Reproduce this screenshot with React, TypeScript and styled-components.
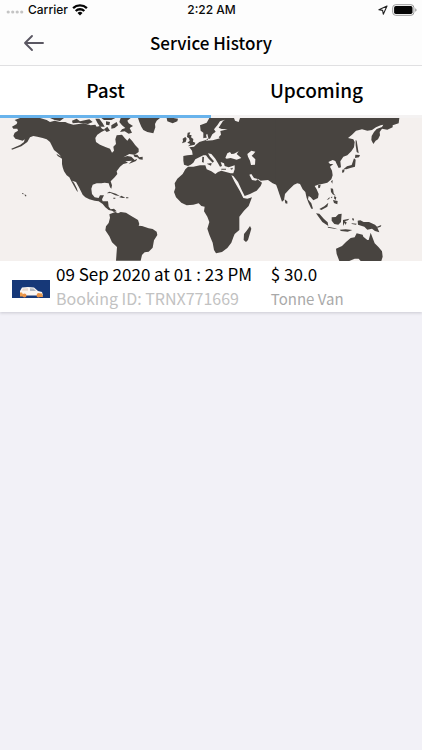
import React, { useState } from "react";
import styled, { createGlobalStyle } from "styled-components";

const GlobalStyle = createGlobalStyle`
  * { box-sizing: border-box; }
  body { margin: 0; background: #f2f1f7; color: #0b0b0b; font-family: "Noto Sans CJK SC", "Noto Sans", sans-serif; }
`;

const Page = styled.div`
  min-height: 100vh;
  background: #f2f1f7;
`;

const StatusBar = styled.div`
  display: grid;
  grid-template-columns: 1fr auto 1fr;
  align-items: center;
  height: 20px;
  padding: 0 5px 0 6px;
  background: #fdfdfd;
  font: 500 12px/20px Inter, sans-serif;
`;

const StatusGroup = styled.div<{ $end?: boolean }>`
  display: flex;
  align-items: center;
  justify-content: ${(p) => (p.$end ? "flex-end" : "flex-start")};
  gap: 4px;
`;

const Header = styled.header`
  display: grid;
  grid-template-columns: 44px 1fr 44px;
  align-items: center;
  height: 46px;
  padding: 0 12px;
  background: #fdfdfd;
  border-bottom: 1px solid #e0e0e2;
`;

const BackButton = styled.button`
  display: flex;
  align-items: center;
  justify-content: center;
  height: 44px;
  padding: 0;
  border: 0;
  background: none;
  cursor: pointer;
`;

const Title = styled.h1`
  margin: 0;
  text-align: center;
  color: #000;
  font-size: 17px;
  font-weight: 500;
  line-height: 24px;
`;

const Tabs = styled.div`
  display: flex;
  height: 52px;
  background: #fff;
`;

const Tab = styled.button<{ $active: boolean }>`
  flex: 1;
  padding: 0 0 2px;
  border: 0;
  border-bottom: 3px solid ${(p) => (p.$active ? "#68b3ec" : "#f4f2f2")};
  background: none;
  color: #000;
  font-family: inherit;
  font-size: 19px;
  font-weight: 500;
  line-height: 28px;
  cursor: pointer;
`;

const Card = styled.article`
  background: #fff;
  box-shadow: 0 1px 3px rgba(40, 40, 60, 0.2);
`;

const MapPicture = styled.svg`
  display: block;
  width: 100%;
  height: auto;
  background: #f4f0ee;
`;

const Details = styled.div`
  display: grid;
  grid-template-columns: 38px 3fr 2fr;
  column-gap: 6px;
  align-items: center;
  padding: 0 12px 1px;
`;

const VanPicture = styled.svg`
  display: block;
  width: 38px;
  height: 18px;
  margin-top: 5px;
`;

const Column = styled.div`
  white-space: nowrap;
`;

const Primary = styled.div`
  color: #000;
  font-size: 17px;
  line-height: 25px;
`;

const Secondary = styled.div<{ $service?: boolean }>`
  font-size: ${(p) => (p.$service ? "15px" : "16px")};
  line-height: 25px;
  color: ${(p) => (p.$service ? "#a9a9a9" : "#c2c2c2")};
`;

function SignalDots() {
  return (
    <svg width="18" height="12" viewBox="0 0 18 12" fill="#c4c4c4" aria-hidden="true">
      <circle cx="2.2" cy="8" r="1.6" />
      <circle cx="6.7" cy="8" r="1.6" />
      <circle cx="11.2" cy="8" r="1.6" />
      <circle cx="15.7" cy="8" r="1.6" />
    </svg>
  );
}

function Wifi() {
  return (
    <svg width="16" height="12" viewBox="0 0 16 12" fill="none" stroke="#050505" strokeWidth="2.3" aria-hidden="true">
      <path d="M1.1 4.2a10 10 0 0 1 13.8 0M3.7 7a6.2 6.2 0 0 1 8.6 0" />
      <path d="M8 11.6 5.5 9a3.6 3.6 0 0 1 5 0Z" fill="#050505" stroke="none" />
    </svg>
  );
}

function LocationArrow() {
  return (
    <svg width="10" height="10" viewBox="0 0 10 10" fill="none" stroke="#222" strokeWidth="1.1" strokeLinejoin="round" aria-hidden="true">
      <path d="M9 1 .9 4.7l3.7.7.7 3.8Z" />
    </svg>
  );
}

function Battery() {
  return (
    <svg width="25" height="12" viewBox="0 0 25 12" aria-hidden="true">
      <rect x=".7" y=".7" width="21.2" height="10.6" rx="3" fill="#fff" stroke="#999" />
      <rect x="2.1" y="2.1" width="18.4" height="7.8" rx="1.7" fill="#050505" />
      <path d="M23.2 4.2q1.4.6 1.4 1.8t-1.4 1.8Z" fill="#999" />
    </svg>
  );
}

function BackArrow() {
  return (
    <svg width="22" height="18" viewBox="0 0 22 18" fill="none" stroke="#5a5762" strokeWidth="1.9" strokeLinecap="round" strokeLinejoin="round" aria-hidden="true">
      <path d="M20 9H2M9 2 2 9l7 7" />
    </svg>
  );
}

function WorldMap() {
  const land = "#484440";
  const sea = "#f4f0ee";
  return (
    <MapPicture viewBox="0 12 1266 429" role="img" aria-label="World map">
      <g fill={land}>
        <path d="M60 12 44 18 52 24 50 30 36 38 40 44 52 44 54 50 44 56 40 66 46 74 60 78 68 80 74 76 72 84 60 93 34 104 36 107 64 97 82 84 90 70 100 66 112 68 128 72 140 76 150 84 156 96 162 108 172 116 180 124 186 134 186 150 188 160 192 172 200 184 208 190 214 202 222 216 230 230 234 234 230 222 222 206 216 200 228 204 236 218 244 234 248 242 256 250 268 256 284 260 296 262 308 270 316 280 326 288 336 290 342 294 350 292 342 284 332 286 326 278 324 262 308 262 306 256 312 244 300 244 296 252 284 250 276 240 274 224 278 212 290 208 304 208 314 206 326 208 330 220 334 224 336 214 332 202 344 190 352 180 350 172 360 158 370 150 384 146 376 142 396 140 386 150 408 141 412 134 404 138 394 128 382 126 370 130 388 120 404 122 416 114 416 104 406 94 396 80 388 72 382 80 374 72 366 62 350 64 346 76 348 90 340 98 342 110 336 116 330 104 318 100 300 92 288 84 286 72 292 62 304 54 316 48 306 44 300 36 290 38 286 32 272 34 250 28 236 30 220 32 204 28 196 24 180 24 164 20 150 24 140 18 120 12Z" />
        <path d="M362 12 392 12 382 20 386 28 399 36 389 42 396 56 386 59 374 52 360 54 366 46 376 42 366 34 358 24ZM312 46 322 38 330 50 320 54ZM150 12 192 12 180 21 164 18ZM216 20 230 14 240 22 268 16 278 24 264 30 236 26 218 28ZM286 14 298 14 308 28 314 38 300 38 292 26ZM304 12 346 12 334 18 312 18ZM318 22 330 24 328 34 318 32ZM334 34 350 24 354 34 344 42 334 44ZM400 122 412 122 418 130 428 128 428 137 418 136 412 130 404 129ZM414 12 418 24 424 38 430 48 442 54 460 58 466 40 465 30 470 20 480 12ZM500 12 502 22 518 28 532 22 534 14 520 12Z" />
        <path d="m320 238 8-5 20 6 12 8-14-3-14-7Zm38 12 6-5 12 6-8 1Zm20 0h7v3h-7Zm-38 1h6v3h-6ZM66 237l4 1 1 3-4-1Zm8 4 5 3-1 4-4-4ZM151 76l5 8 2 9-5-7Zm18 43 20 12-1 4-15-9Z" />
        <path d="m346 294 8 4 8-4 16 2 12 8 14 8 10 6 4 12-2 5 10 1 20 7 12 2 12 8 2 10-10 16-4 22-12 12-12 2-8 8-4 17H348l3-41-15-14-8-18-12-18 2-12 8-10 4-16-2-10Z" />
      </g>
      <g transform="translate(420 0)" fill={land}>
        <path d="M412 12H208L200 26 180 34 182 50 190 56 190 72 198 78 178 84 168 92 162 98 148 100 156 110 158 122 142 124 130 126 130 140 132 152 144 156 152 152 160 146 166 136 178 130 190 124 198 124 206 134 218 146 222 142 210 128 204 118 214 120 226 134 234 148 240 158 246 156 242 144 252 148 254 156 266 160 284 154 284 166 280 178 272 178 258 174 244 170 234 174 226 180 214 172 200 166 196 154 180 154 160 158 144 158 136 166 128 180 112 194 104 208 106 222 102 234 108 250 124 266 140 274 160 272 176 268 184 276 194 278 192 292 202 308 208 324 202 344 208 362 218 386 222 408 228 418 246 414 262 402 274 386 280 370 284 360 298 348 298 308 312 290 326 276 336 250 322 254 310 252 300 232 284 204 274 184 280 186 294 204 306 230 314 246 330 240 350 230 362 216 366 206 352 196 348 200 336 198 328 182 334 180 342 192 356 196 362 200 384 198 398 208 412 214Z" />
        <path d="M143 56 151 55 148 62 155 64 153 70 160 75 159 83 166 86 164 92 144 97 151 90 142 86 149 80 147 73 141 69ZM128 74 136 69 140 74 137 84 126 88 129 81ZM330 336 334 344 324 378 318 384 311 378 312 360 320 350ZM200 149 215 147 213 155ZM187 128 192 129 191 146 186 144ZM244 164h14v3h-14ZM270 164l9-3-3 6Z" />
        <path fill={sea} d="m240 22-8 12-10 12 5 7-10 8-7 13h-9l-3 6 20-1 22-6-4-3 7-8-2-11 22-5-18-1-9-4 13-20 6-4ZM256 132l6-14 8-4 4 6 8-1 14-7-6 8 14 12-14 5-18-5-12 2ZM322 120l12-10 12 3-6 8-5 4 11 11-1 16-12 1-3-13-6-12ZM282 12h18l-4 12-11-4ZM190 72l10-1-2-9 4-2 3 12-2 6-10-1Z" />
      </g>
      <g transform="translate(816 0)" fill={land}>
        <path d="M10 12V206L16 222 22 240 30 263 36 258 39 240 52 226 66 212 76 208 84 210 92 226 100 234 104 252 110 268 118 284 123 284 118 268 108 256 110 246 116 250 124 259 138 252 140 240 134 226 128 216 138 212 150 210 166 206 178 196 182 184 180 170 174 158 184 150 174 150 169 144 182 138 190 141 194 150 200 162 207 160 205 142 214 128 226 124 238 112 246 100 248 84 244 76 228 72 240 62 252 50 270 46 286 50 300 48 312 40 326 34 334 32 330 39 314 45 306 54 299 66 298 78 304 90 311 80 318 76 324 64 323 54 330 44 346 47 362 40 362 34 380 28 382 12Z" />
        <path d="m38 256 8 6v7l-6-1ZM138 214l8-2-2 9-5 2ZM177 202l5-4-1 11ZM251 78l3 2 6 38-6-4-3-20ZM250 122l14 1-3 7-12 2ZM246 133l5 4-2 21-14 4-12 4-8-1 10-8 14-4ZM211 167l7-1-2 9-6 1ZM176 223l7 1 2 14 6 8-9-5-5-7ZM183 258l14 3-1 10-10-4ZM176 249l5-1-1 5ZM187 246l6 4-2 8-5-5ZM173 249l-1 6-8 3ZM142 285l15-8 12-11-3 12-18 10ZM132 298l10 1 14 16 11 10 2 11-18-12ZM167 338l20 4 10 4-29-5ZM203 347l18-1 20 2-14 5-20-2ZM179 310l12-1 8-8 10-2-2 25-8 8-12-2-8-10ZM213 318l19-4-4 5-10 3 6 3-3 8-3-7-5 10ZM241 312l5 2-1 6-4-2ZM238 328l16 1-2 3-12-2ZM257 320l8-1 10 5 16 0 18 8 6 6 7 17-13-4-9-7-14 3-9-9-19-6ZM315 338l13-5-2 5-9 3Z" />
        <path d="M202 441 194 420 192 404 210 396 222 384 236 372 248 370 254 358 272 362 274 368 286 378 290 378 296 356 302 372 308 388 320 400 330 412 332 428 328 441H266L260 434 248 434 232 441Z" />
      </g>
    </MapPicture>
  );
}

function Van() {
  return (
    <VanPicture viewBox="0 0 38 18" role="img" aria-label="Van">
      <path fill="#163878" d="M0 0h38v18H0Z" />
      <path fill="#fbf6f2" d="M8 15.5V11l2-3.5q6-1 12 0l4 3.5 4 1 1 3.5Z" />
      <path fill="#b3bac2" d="m18 8.2 3.5.3 2.5 2.5h-6Z" />
      <path fill="#e9d9cd" d="m11 8.6 5-.4v2.6h-6Z" />
      <path fill="#eb9a4b" d="M8 12.5h2l2 4H8Zm17.500.5 4.500.5 1 3.500h-5.500Z" />
      <circle cx="12.5" cy="15.5" r="2" fill="#e99247" />
      <circle cx="26.5" cy="15.5" r="2" fill="#e99247" />
    </VanPicture>
  );
}

export default function App() {
  const [tab, setTab] = useState("Past");
  return (
    <Page>
      <GlobalStyle />
      <StatusBar>
        <StatusGroup><SignalDots /><span>Carrier</span><Wifi /></StatusGroup>
        <span>2:22 AM</span>
        <StatusGroup $end><LocationArrow /><Battery /></StatusGroup>
      </StatusBar>
      <Header>
        <BackButton aria-label="Back"><BackArrow /></BackButton>
        <Title>Service History</Title>
      </Header>
      <Tabs role="tablist">
        {["Past", "Upcoming"].map((name) => (
          <Tab key={name} role="tab" aria-selected={tab === name} $active={tab === name} onClick={() => setTab(name)}>
            {name}
          </Tab>
        ))}
      </Tabs>
      <Card>
        <WorldMap />
        <Details>
          <Van />
          <Column>
            <Primary>09 Sep 2020 at 01 : 23 PM</Primary>
            <Secondary>Booking ID: TRNX771669</Secondary>
          </Column>
          <Column>
            <Primary>$ 30.0</Primary>
            <Secondary $service>Tonne Van</Secondary>
          </Column>
        </Details>
      </Card>
    </Page>
  );
}
